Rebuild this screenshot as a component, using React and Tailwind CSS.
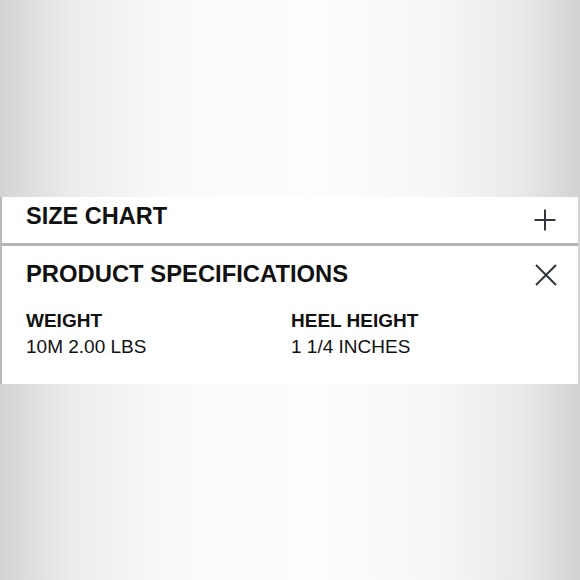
const specs = [
  { label: 'WEIGHT', value: '10M 2.00 LBS' },
  { label: 'HEEL HEIGHT', value: '1 1/4 INCHES' },
];

const PlusIcon = () => (
  <svg width="24" height="24" viewBox="0 0 24 24" fill="none" stroke="#30363b" strokeWidth="2">
    <path d="M12 1.5v21M1.5 12h21" />
  </svg>
);

const CloseIcon = () => (
  <svg width="24" height="24" viewBox="0 0 24 24" fill="none" stroke="#30363b" strokeWidth="2">
    <path d="M2 2l20 20M22 2L2 22" />
  </svg>
);

const App = () => {
  return (
    <div
      className="w-[580px] h-[580px] flex flex-col bg-[linear-gradient(to_right,#d3d3d3,#ececec_12%,#fafafa_30%,#fdfdfd_55%,#f7f7f7_75%,#e9e9e9_90%,#d2d2d2)]"
      style={{ fontFamily: '"Liberation Sans", Arial, sans-serif' }}
    >
      <div className="h-[197px] shrink-0" />

      <div className="mr-[2px] bg-white border-l-2 border-[#b9b9b9] text-[#111]">
        {/* Size chart */}
        <div className="h-[46px] flex items-center justify-between pl-[24px] pr-[22px] pb-[7px]">
          <span className="text-[23.5px] font-bold leading-none">SIZE CHART</span>
          <div className="mt-[6px] mr-[-1px]">
            <PlusIcon />
          </div>
        </div>

        <div className="h-[3px] bg-[#b4b4b4]" />

        {/* Product specifications */}
        <div className="pl-[24px] pr-[22px] pt-[15px] pb-[28px]">
          <div className="flex items-center justify-between">
            <span className="text-[23.8px] font-bold leading-none">PRODUCT SPECIFICATIONS</span>
            <div className="mt-[2px] mr-[-2px]">
              <CloseIcon />
            </div>
          </div>
          <div className="grid grid-cols-[265px_1fr] mt-[25px]">
            {specs.map((s) => (
              <div key={s.label} className="flex flex-col gap-[8px]">
                <span className="text-[19px] font-bold leading-[18px]">{s.label}</span>
                <span className="text-[19px] leading-[18px]">{s.value}</span>
              </div>
            ))}
          </div>
        </div>
      </div>
    </div>
  );
};

export default App;
